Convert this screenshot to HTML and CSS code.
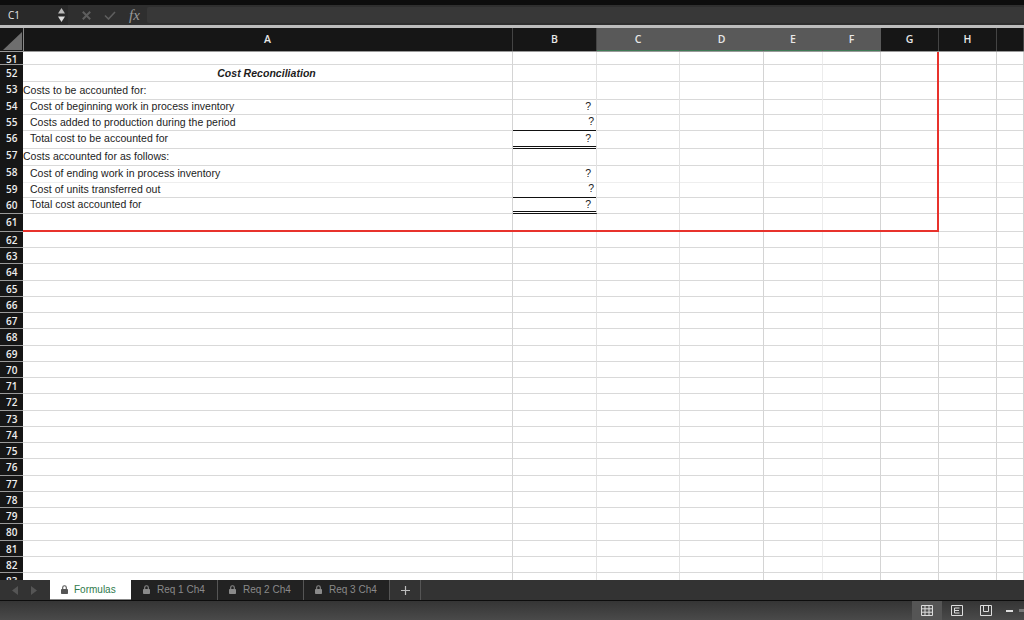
FILE: index.html
```html
<!DOCTYPE html>
<html lang="en">
<head>
<meta charset="utf-8">
<title>Cost Reconciliation</title>
<link rel="stylesheet" href="styles.css">
</head>
<body>
<div class="app">
  <header class="formula-bar">
    <div class="name-box">C1<svg class="stepper" width="7" height="14" viewBox="0 0 7 14"><path d="M3.500 0 7 5.500H0Z" fill="#bbb"/><path d="M0 8.500H7L3.500 14Z" fill="#ddd"/></svg></div>
    <svg class="fb-icon x" width="9" height="9" viewBox="0 0 9 9"><path d="M.800 .800 8.200 8.200M8.200 .800 .800 8.200" stroke="#5e5e5e" stroke-width="2" fill="none"/></svg>
    <svg class="fb-icon check" width="12" height="9" viewBox="0 0 12 9"><path d="M1 4.500 4.500 8 11 1" stroke="#5e5e5e" stroke-width="1.600" fill="none"/></svg>
    <span class="fx">fx</span>
    <div class="formula-input"></div>
  </header>
  <main class="sheet">
    <div class="row head"><div class="corner"><svg width="23" height="23" viewBox="0 0 23 23"><path d="M22 4V22H3Z" fill="#6e6e6e"/></svg></div><div class="col">A</div><div class="col">B</div><div class="col sel">C</div><div class="col sel">D</div><div class="col sel">E</div><div class="col sel">F</div><div class="col">G</div><div class="col">H</div><div class="col"></div></div>
    <div class="row h14"><div class="rh">51</div><div class="c"></div><div class="c"></div><div class="c"></div><div class="c"></div><div class="c"></div><div class="c"></div><div class="c"></div><div class="c"></div><div class="c"></div></div>
    <div class="row h16"><div class="rh">52</div><div class="c title">Cost Reconciliation</div><div class="c"></div><div class="c"></div><div class="c"></div><div class="c"></div><div class="c"></div><div class="c"></div><div class="c"></div><div class="c"></div></div>
    <div class="row h17 low"><div class="rh">53</div><div class="c label">Costs to be accounted for:</div><div class="c"></div><div class="c"></div><div class="c"></div><div class="c"></div><div class="c"></div><div class="c"></div><div class="c"></div><div class="c"></div></div>
    <div class="row h16"><div class="rh">54</div><div class="c label in">Cost of beginning work in process inventory</div><div class="c q">?</div><div class="c"></div><div class="c"></div><div class="c"></div><div class="c"></div><div class="c"></div><div class="c"></div><div class="c"></div></div>
    <div class="row h16"><div class="rh">55</div><div class="c label in">Costs added to production during the period</div><div class="c q q2 under">?</div><div class="c"></div><div class="c"></div><div class="c"></div><div class="c"></div><div class="c"></div><div class="c"></div><div class="c"></div></div>
    <div class="row h17"><div class="rh">56</div><div class="c label in">Total cost to be accounted for</div><div class="c q dbl">?</div><div class="c"></div><div class="c"></div><div class="c"></div><div class="c"></div><div class="c"></div><div class="c"></div><div class="c"></div></div>
    <div class="row h17 low"><div class="rh">57</div><div class="c label">Costs accounted for as follows:</div><div class="c"></div><div class="c"></div><div class="c"></div><div class="c"></div><div class="c"></div><div class="c"></div><div class="c"></div><div class="c"></div></div>
    <div class="row h17 low faint"><div class="rh">58</div><div class="c label in">Cost of ending work in process inventory</div><div class="c q">?</div><div class="c"></div><div class="c"></div><div class="c"></div><div class="c"></div><div class="c"></div><div class="c"></div><div class="c"></div></div>
    <div class="row h16"><div class="rh">59</div><div class="c label in">Cost of units transferred out</div><div class="c q q2 under">?</div><div class="c"></div><div class="c"></div><div class="c"></div><div class="c"></div><div class="c"></div><div class="c"></div><div class="c"></div></div>
    <div class="row h17 high"><div class="rh">60</div><div class="c label in">Total cost accounted for</div><div class="c q dbl">?</div><div class="c"></div><div class="c"></div><div class="c"></div><div class="c"></div><div class="c"></div><div class="c"></div><div class="c"></div></div>
    <div class="row h18"><div class="rh">61</div><div class="c"></div><div class="c"></div><div class="c"></div><div class="c"></div><div class="c"></div><div class="c"></div><div class="c"></div><div class="c"></div><div class="c"></div></div>
    <div class="row h16"><div class="rh">62</div><div class="c"></div><div class="c"></div><div class="c"></div><div class="c"></div><div class="c"></div><div class="c"></div><div class="c"></div><div class="c"></div><div class="c"></div></div>
    <div class="row"><div class="rh">63</div><div class="c"></div><div class="c"></div><div class="c"></div><div class="c"></div><div class="c"></div><div class="c"></div><div class="c"></div><div class="c"></div><div class="c"></div></div>
    <div class="row"><div class="rh">64</div><div class="c"></div><div class="c"></div><div class="c"></div><div class="c"></div><div class="c"></div><div class="c"></div><div class="c"></div><div class="c"></div><div class="c"></div></div>
    <div class="row"><div class="rh">65</div><div class="c"></div><div class="c"></div><div class="c"></div><div class="c"></div><div class="c"></div><div class="c"></div><div class="c"></div><div class="c"></div><div class="c"></div></div>
    <div class="row"><div class="rh">66</div><div class="c"></div><div class="c"></div><div class="c"></div><div class="c"></div><div class="c"></div><div class="c"></div><div class="c"></div><div class="c"></div><div class="c"></div></div>
    <div class="row"><div class="rh">67</div><div class="c"></div><div class="c"></div><div class="c"></div><div class="c"></div><div class="c"></div><div class="c"></div><div class="c"></div><div class="c"></div><div class="c"></div></div>
    <div class="row"><div class="rh">68</div><div class="c"></div><div class="c"></div><div class="c"></div><div class="c"></div><div class="c"></div><div class="c"></div><div class="c"></div><div class="c"></div><div class="c"></div></div>
    <div class="row"><div class="rh">69</div><div class="c"></div><div class="c"></div><div class="c"></div><div class="c"></div><div class="c"></div><div class="c"></div><div class="c"></div><div class="c"></div><div class="c"></div></div>
    <div class="row"><div class="rh">70</div><div class="c"></div><div class="c"></div><div class="c"></div><div class="c"></div><div class="c"></div><div class="c"></div><div class="c"></div><div class="c"></div><div class="c"></div></div>
    <div class="row"><div class="rh">71</div><div class="c"></div><div class="c"></div><div class="c"></div><div class="c"></div><div class="c"></div><div class="c"></div><div class="c"></div><div class="c"></div><div class="c"></div></div>
    <div class="row"><div class="rh">72</div><div class="c"></div><div class="c"></div><div class="c"></div><div class="c"></div><div class="c"></div><div class="c"></div><div class="c"></div><div class="c"></div><div class="c"></div></div>
    <div class="row"><div class="rh">73</div><div class="c"></div><div class="c"></div><div class="c"></div><div class="c"></div><div class="c"></div><div class="c"></div><div class="c"></div><div class="c"></div><div class="c"></div></div>
    <div class="row"><div class="rh">74</div><div class="c"></div><div class="c"></div><div class="c"></div><div class="c"></div><div class="c"></div><div class="c"></div><div class="c"></div><div class="c"></div><div class="c"></div></div>
    <div class="row"><div class="rh">75</div><div class="c"></div><div class="c"></div><div class="c"></div><div class="c"></div><div class="c"></div><div class="c"></div><div class="c"></div><div class="c"></div><div class="c"></div></div>
    <div class="row"><div class="rh">76</div><div class="c"></div><div class="c"></div><div class="c"></div><div class="c"></div><div class="c"></div><div class="c"></div><div class="c"></div><div class="c"></div><div class="c"></div></div>
    <div class="row"><div class="rh">77</div><div class="c"></div><div class="c"></div><div class="c"></div><div class="c"></div><div class="c"></div><div class="c"></div><div class="c"></div><div class="c"></div><div class="c"></div></div>
    <div class="row"><div class="rh">78</div><div class="c"></div><div class="c"></div><div class="c"></div><div class="c"></div><div class="c"></div><div class="c"></div><div class="c"></div><div class="c"></div><div class="c"></div></div>
    <div class="row"><div class="rh">79</div><div class="c"></div><div class="c"></div><div class="c"></div><div class="c"></div><div class="c"></div><div class="c"></div><div class="c"></div><div class="c"></div><div class="c"></div></div>
    <div class="row"><div class="rh">80</div><div class="c"></div><div class="c"></div><div class="c"></div><div class="c"></div><div class="c"></div><div class="c"></div><div class="c"></div><div class="c"></div><div class="c"></div></div>
    <div class="row"><div class="rh">81</div><div class="c"></div><div class="c"></div><div class="c"></div><div class="c"></div><div class="c"></div><div class="c"></div><div class="c"></div><div class="c"></div><div class="c"></div></div>
    <div class="row"><div class="rh">82</div><div class="c"></div><div class="c"></div><div class="c"></div><div class="c"></div><div class="c"></div><div class="c"></div><div class="c"></div><div class="c"></div><div class="c"></div></div>
    <div class="row"><div class="rh">83</div><div class="c"></div><div class="c"></div><div class="c"></div><div class="c"></div><div class="c"></div><div class="c"></div><div class="c"></div><div class="c"></div><div class="c"></div></div>
    <div class="red-box"></div>
  </main>
  <nav class="tabs">
    <div class="arrows"><svg width="6" height="9" viewBox="0 0 6 9"><path d="M6 0V9L0 4.500Z" fill="#555"/></svg><svg width="6" height="9" viewBox="0 0 6 9"><path d="M0 0V9L6 4.500Z" fill="#555"/></svg></div>
    <div class="tab active"><svg class="lock" width="7" height="9" viewBox="0 0 7 9"><path d="M1.700 4.500V2.600a1.800 1.800 0 0 1 3.600 0V4.500" stroke="currentColor" fill="none" stroke-width="1.100"/><rect y="4" width="7" height="5" rx=".8" fill="currentColor"/></svg>Formulas</div>
    <div class="tab"><svg class="lock" width="7" height="9" viewBox="0 0 7 9"><path d="M1.700 4.500V2.600a1.800 1.800 0 0 1 3.600 0V4.500" stroke="currentColor" fill="none" stroke-width="1.100"/><rect y="4" width="7" height="5" rx=".8" fill="currentColor"/></svg>Req 1 Ch4</div>
    <div class="tab"><svg class="lock" width="7" height="9" viewBox="0 0 7 9"><path d="M1.700 4.500V2.600a1.800 1.800 0 0 1 3.600 0V4.500" stroke="currentColor" fill="none" stroke-width="1.100"/><rect y="4" width="7" height="5" rx=".8" fill="currentColor"/></svg>Req 2 Ch4</div>
    <div class="tab"><svg class="lock" width="7" height="9" viewBox="0 0 7 9"><path d="M1.700 4.500V2.600a1.800 1.800 0 0 1 3.600 0V4.500" stroke="currentColor" fill="none" stroke-width="1.100"/><rect y="4" width="7" height="5" rx=".8" fill="currentColor"/></svg>Req 3 Ch4</div>
    <div class="tab add"><svg width="9" height="9" viewBox="0 0 9 9"><path d="M4.500 0V9M0 4.500H9" stroke="#bdbdbd" stroke-width="1.200" fill="none"/></svg></div>
  </nav>
  <footer class="status">
    <div class="view on"><svg width="12" height="11" viewBox="0 0 12 11"><path d="M.500 .500H11.500V10.500H.500ZM4 .500V10.500M8 .500V10.500M.500 3.800H11.500M.500 7.200H11.500" stroke="#ddd" fill="none"/></svg></div>
    <div class="view"><svg width="12" height="11" viewBox="0 0 12 11"><path d="M.500 .500H11.500V10.500H.500ZM8.500 3H3.500V8H8.500M3.500 5.500H8" stroke="#ddd" fill="none"/></svg></div>
    <div class="view"><svg width="12" height="11" viewBox="0 0 12 11"><path d="M.500 .500H11.500V10.500H.500ZM3.500 .500V6.500H8.500V.500" stroke="#ddd" fill="none"/></svg></div>
    <div class="zoom"><span class="minus"></span><span class="slider"></span></div>
  </footer>
</div>
</body>
</html>
```
FILE: styles.css
```css
* { box-sizing: border-box; }
html, body { margin: 0; height: 100%; overflow: hidden; background: #fff; }
body { font-family: "Liberation Sans", Arial, sans-serif; }
.app { width: 1024px; height: 620px; display: flex; flex-direction: column; overflow: hidden; }

.formula-bar { height: 28px; flex: none; background: #2f2f2f; border-top: 5px solid #0d0d0d; border-bottom: 3px solid #bdbdbd; display: flex; align-items: center; }
.name-box { width: 68px; height: 100%; padding: 0 3px 0 8px; display: flex; align-items: center; justify-content: space-between; font: 10px/1 "Open Sans", sans-serif; color: #e8e8e8; background: #292929; flex: none; }
.x { margin-left: 14px; }
.check { margin-left: 13px; }
.fx { font: italic 15px/1 "Liberation Serif", serif; color: #9a9a9a; margin-left: 13px; width: 18px; }
.formula-input { flex: 1; height: 16px; background: #383838; border-radius: 2px; }

.sheet { position: relative; height: 552px; flex: none; overflow: hidden; display: flex; flex-direction: column; background: #fff; }
.row { display: grid; grid-template-columns: 23px 490px 84px 83px 84px 59px 58px 58px 58px 27px; height: 16.25px; flex: none; }
.h14 { height: 14px; }
.h16 { height: 16px; }
.h17 { height: 17px; }
.h18 { height: 18px; }
.head { height: 23px; background: #161616; box-shadow: 0 1px 0 #9a9a9a; position: relative; z-index: 1; }
.corner { display: flex; background: #161616; border-right: 1px solid #888; width: 24px; }
.col { display: flex; align-items: center; justify-content: center; font: 600 10.5px/1 "Open Sans", sans-serif; color: #e8e8e8; border-right: 1px solid #444; }
.sel { background: #595959; border-right-color: #595959; box-shadow: inset 0 -1px 0 #3f7a55; }
.rh { background: #161616; color: #eee; font: 600 10px/16px "Open Sans", sans-serif; padding-left: 6px; border-bottom: 1px solid #999; overflow: hidden; white-space: nowrap; }
.c { border-right: 1px solid #d4d4d4; border-bottom: 1px solid #d9d9d9; font-size: 10.5px; line-height: 16px; letter-spacing: .03px; color: #1c1c1c; white-space: nowrap; min-width: 0; }
.c:nth-child(3), .c:nth-child(4) { border-right-color: #e2e2e2; }
.c:nth-child(6) { border-right-color: #ececec; }
.faint .c { border-bottom-color: #eee; }
.low .c { line-height: 18px; }
.high .c { line-height: 14px; }
.title { font-weight: 700; font-style: italic; text-align: center; padding-right: 2px; }
.in { padding-left: 7px; }
.q { text-align: right; padding-right: 5px; }
.c.q2 { padding-right: 2px; line-height: 14px; }
.c.under { border-bottom-color: #111; }
.c.dbl { border-bottom: 3px double #111; }

.red-box { position: absolute; left: 23px; top: 23px; width: 916px; height: 181px; border-right: 2px solid #e8322c; border-bottom: 2px solid #e8322c; pointer-events: none; }

.tabs { height: 21px; flex: none; background: #333; border-bottom: 1px solid #0d0d0d; display: flex; align-items: stretch; font-size: 10px; position: relative; }
.arrows { width: 50px; display: flex; align-items: center; gap: 13px; padding-left: 12px; flex: none; }
.tab { width: 86px; flex: none; display: flex; align-items: center; gap: 7px; padding: 0 0 2px 11px; background: #222; color: #8a8a8a; border-right: 1px solid #555; }
.tab.active { width: 81px; gap: 6px; background: #fff; color: #2f7a4c; box-shadow: inset 0 -1px 0 #888; border-right: 0; }
.tab.active + .tab { margin-left: 0; padding-left: 12px; width: 87px; }
.tab.active .lock { color: #555; }
.tab.add { width: 31px; background: #333; padding: 0; justify-content: center; }
.status { height: 19px; flex: none; background: linear-gradient(#353535, #4a4a4a); display: flex; justify-content: flex-end; align-items: center; overflow: hidden; }
.view { width: 29px; height: 19px; display: flex; align-items: center; justify-content: center; flex: none; }
.view.on { width: 30px; background: #555; }
.zoom { width: 24px; display: flex; align-items: center; gap: 6px; padding-left: 6px; flex: none; }
.minus { width: 7px; height: 2px; background: #ddd; flex: none; }
.slider { width: 12px; height: 3px; background: #777; flex: none; }
```
